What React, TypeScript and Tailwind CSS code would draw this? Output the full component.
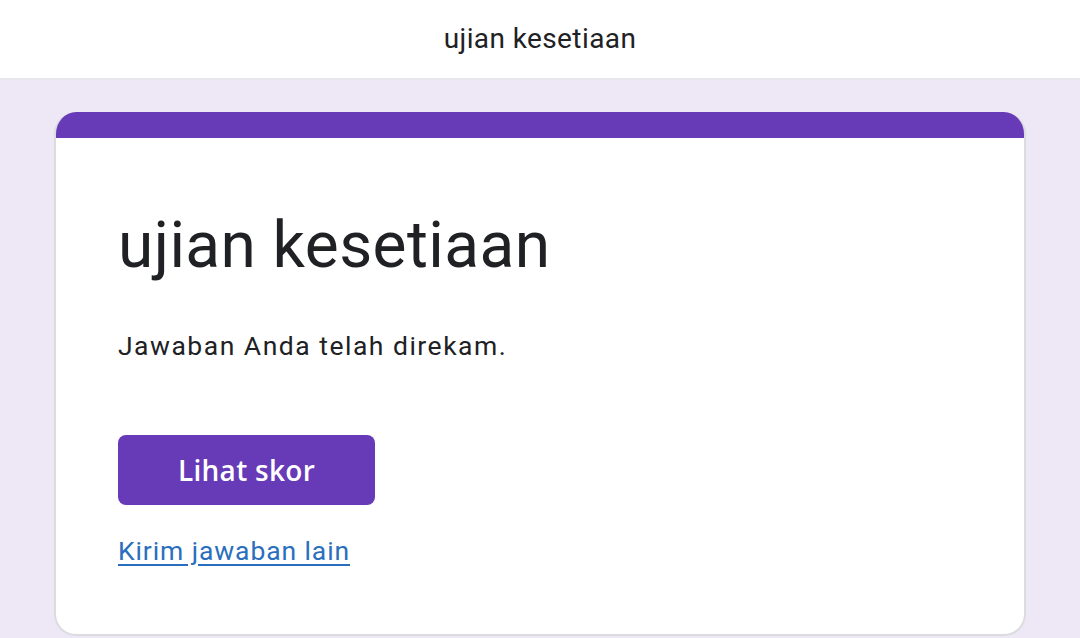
import React from "react";

export default function App(): JSX.Element {
  return (
    <div className="min-h-[638px] w-full bg-[#ede7f6] font-['Roboto',sans-serif] text-[#202124]">
      <header className="flex h-[80px] items-center justify-center border-b-2 border-[#e8e8ec] bg-white">
        <h1 className="text-[28px] leading-none tracking-[0.4px] text-[#202124]">ujian kesetiaan</h1>
      </header>

      <main className="px-[54px] pt-[32px]">
        <div className="overflow-hidden rounded-[22px] border-2 border-t-0 border-[#dadce0] bg-white">
          <div className="h-[26px] bg-[#673ab7]" />
          <div className="px-[62px] pb-[67px] pt-[70px]">
            <h2 className="text-[64px] leading-[76px] tracking-[0.4px] text-[#202124]">ujian kesetiaan</h2>
            <p className="mt-[46px] text-[26.5px] leading-[32px] tracking-[1.5px] text-[#202124]">
              Jawaban Anda telah direkam.
            </p>
            <button className="mt-[73px] flex h-[70px] w-[257px] items-center justify-center rounded-[8px] bg-[#673ab7] font-['Open_Sans',sans-serif] text-[28px] font-semibold tracking-[0.3px] text-white">
              Lihat skor
            </button>
            <a
              href="#"
              className="mt-[30px] inline-block text-[26.5px] leading-[32px] tracking-[0.9px] text-[#2a6fbe] underline underline-offset-[4px]"
            >
              Kirim jawaban lain
            </a>
          </div>
        </div>
      </main>
    </div>
  );
}
